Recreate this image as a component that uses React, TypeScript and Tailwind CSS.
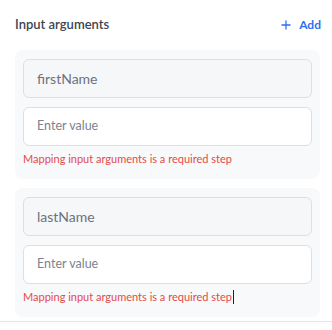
import { Plus } from "lucide-react"

const args = [
  { name: "firstName", caret: false },
  { name: "lastName", caret: true },
]

function ArgumentCard({ name, caret }: { name: string; caret: boolean }) {
  return (
    <div className="rounded-lg bg-[#f8f9fb] px-2 pt-[9px] pb-[13px]">
      <div className="flex h-[39px] items-center rounded-md border border-[#dcdfe5] bg-[#f6f7f9] px-[13px] text-[14px] text-[#6b7280]">
        {name}
      </div>
      <div className="mt-[9px] flex h-[39px] items-center rounded-md border border-[#dcdfe5] bg-white px-[13px] text-[12.5px] text-[#7c8290]">
        Enter value
      </div>
      <p className="mt-[6px] flex items-center text-[11px] leading-[14px] text-[#e34a4a]">
        Mapping input arguments is a required step
        {caret && <span className="ml-px inline-block h-[14px] w-px bg-[#222]" />}
      </p>
    </div>
  )
}

export default function App() {
  return (
    <div className="h-[330px] w-[332px] bg-white font-['Lato',sans-serif]">
      <div className="flex items-center justify-between pl-[15px] pr-[11px] pt-[15px]">
        <h2 className="text-[13px] font-semibold text-[#3d4452]">Input arguments</h2>
        <button className="flex items-center gap-[6px] text-[12px] font-bold text-[#2f6fed]">
          <Plus size={14} strokeWidth={2.2} />
          Add
        </button>
      </div>
      <div className="mt-[15px] flex flex-col gap-[9px] pl-[15px] pr-[12px]">
        {args.map((a) => (
          <ArgumentCard key={a.name} name={a.name} caret={a.caret} />
        ))}
      </div>
      <div className="mt-[4px] border-t border-[#e5e7eb]" />
    </div>
  )
}
